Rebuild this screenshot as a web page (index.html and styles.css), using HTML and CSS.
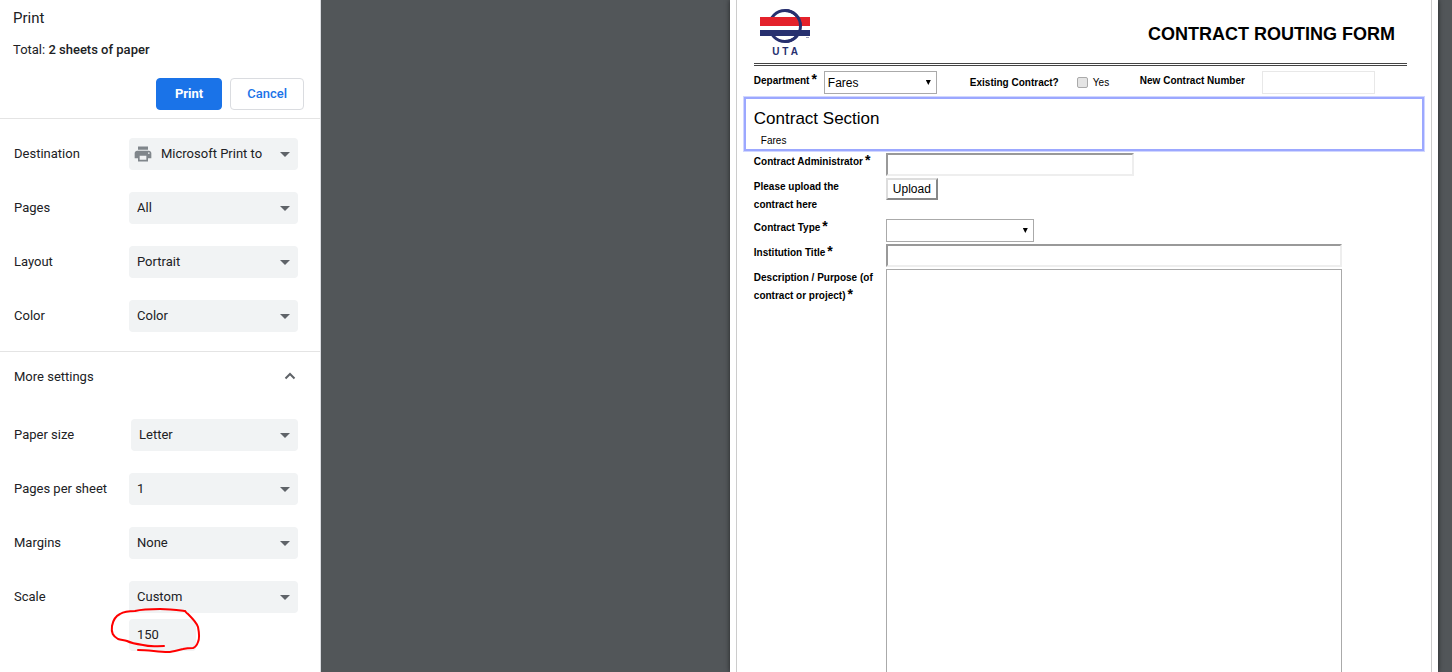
FILE: index.html
```html
<!DOCTYPE html>
<html lang="en">
<head>
    <meta charset="UTF-8">
    <meta name="viewport" content="width=device-width, initial-scale=1.0">
    <title>Print</title>
    <link rel="stylesheet" href="styles.css">
</head>
<body>

<aside class="sidebar">
    <header class="sidebar-header">
        <h1 class="title">Print</h1>
        <p class="total">Total: <span class="strong">2 sheets of paper</span></p>
        <div class="buttons">
            <button type="button" class="btn btn-primary">Print</button>
            <button type="button" class="btn">Cancel</button>
        </div>
    </header>

    <section class="settings">
        <div class="row">
            <label for="destination">Destination</label>
            <div class="control select has-icon">
                <svg class="printer" viewBox="0 0 24 24" aria-hidden="true">
                    <path d="M19 8H5c-1.66 0-3 1.34-3 3v6h4v4h12v-4h4v-6c0-1.66-1.34-3-3-3zm-3 11H8v-5h8v5zm3-7c-.55 0-1-.45-1-1s.45-1 1-1 1 .45 1 1-.45 1-1 1zm-1-9H6v4h12V3z"/>
                </svg>
                <select id="destination"><option>Microsoft Print to</option></select>
            </div>
        </div>
        <div class="row">
            <label for="pages">Pages</label>
            <div class="control select"><select id="pages"><option>All</option></select></div>
        </div>
        <div class="row">
            <label for="layout">Layout</label>
            <div class="control select"><select id="layout"><option>Portrait</option></select></div>
        </div>
        <div class="row">
            <label for="color">Color</label>
            <div class="control select"><select id="color"><option>Color</option></select></div>
        </div>
    </section>

    <button type="button" class="more">
        More settings
        <svg class="chevron" viewBox="0 0 12 8" aria-hidden="true"><path d="M1.5 6.5 6 2l4.5 4.5"/></svg>
    </button>

    <section class="settings">
        <div class="row">
            <label for="paper">Paper size</label>
            <div class="control select narrow"><select id="paper"><option>Letter</option></select></div>
        </div>
        <div class="row">
            <label for="perSheet">Pages per sheet</label>
            <div class="control select"><select id="perSheet"><option>1</option></select></div>
        </div>
        <div class="row">
            <label for="margins">Margins</label>
            <div class="control select"><select id="margins"><option>None</option></select></div>
        </div>
        <div class="row">
            <label for="scale">Scale</label>
            <div class="control">
                <div class="select"><select id="scale"><option>Custom</option></select></div>
                <div class="scale-value">
                    <input type="text" value="150" aria-label="Scale value">
                    <svg class="marker" viewBox="0 0 92 50" aria-hidden="true">
                        <path d="M54 40C45 40 40 41 33 39C26 38 21 37 17 35C14 34 11 34 8 33C3 30 1 27 2 20C3 14 6 10 10 8C15 5 20 5 25 5C33 3 40 3 50 3C60 3 67 4 75 5C76 6 76 7 78 8C83 13 87 17 88 21C89 26 90 32 88 36C87 39 86 41 83 42C80 42 77 42 73 43C68 44 63 46 58 46C48 46 39 44 28 44"/>
                    </svg>
                </div>
            </div>
        </div>
    </section>
</aside>

<main class="preview">
    <div class="paper">
        <form class="form">
            <header class="form-header">
                <svg class="logo" viewBox="0 0 52 50" role="img" aria-label="UTA">
                    <circle cx="26" cy="18" r="15.500" fill="none" stroke="#27306f" stroke-width="3"/>
                    <rect x="1" y="9" width="50" height="9" fill="#e4222b"/>
                    <rect x="1" y="18" width="50" height="4" fill="#fff"/>
                    <rect x="1" y="22" width="50" height="6" fill="#27306f"/>
                    <path d="M26 2.500A15.500 15.500 0 0 1 26 33.500" fill="none" stroke="#27306f" stroke-width="3"/>
                    <path d="M47 29.500h3" stroke="#9a9db8"/>
                    <text class="logo-text" x="26" y="47" text-anchor="middle">U T A</text>
                </svg>
                <h2 class="form-title">CONTRACT ROUTING FORM</h2>
            </header>

            <div class="top-fields">
                <div class="field">
                    <label class="department" for="department">Department<span class="star">*</span></label>
                    <div class="box-select short"><select id="department"><option>Fares</option></select></div>
                </div>
                <fieldset class="field existing">
                    <legend class="legend">Existing Contract?</legend>
                    <input type="checkbox" id="existing">
                    <label class="yes" for="existing">Yes</label>
                </fieldset>
                <div class="field">
                    <label class="number" for="number">New Contract Number</label>
                    <input type="text" id="number" class="flat short">
                </div>
            </div>

            <section class="contract-section">
                <h3>Contract Section</h3>
                <p>Fares</p>
            </section>

            <div class="fields">
                <label for="admin">Contract Administrator<span class="star">*</span></label>
                <input type="text" id="admin" class="inset medium">

                <label for="upload">Please upload the contract here</label>
                <button type="button" id="upload" class="upload">Upload</button>

                <label for="type">Contract Type<span class="star">*</span></label>
                <div class="box-select type"><select id="type"><option></option></select></div>

                <label for="institution">Institution Title<span class="star">*</span></label>
                <input type="text" id="institution" class="inset wide">

                <label for="description">Description / Purpose (of contract or project)<span class="star">*</span></label>
                <textarea id="description" class="wide"></textarea>
            </div>
        </form>
    </div>
</main>

</body>
</html>
```
FILE: styles.css
```css
* {
    box-sizing: border-box;
}

body {
    display: flex;
    height: 100vh;
    margin: 0;
    overflow: hidden;
    background-color: #525659;
    color: #202124;
    font-family: Roboto, sans-serif;
    font-size: 13px;
}

h1, h2, h3, p {
    margin: 0;
    font-weight: normal;
}

button, input, select, textarea {
    font: inherit;
    color: inherit;
    margin: 0;
}

/* sidebar */
.sidebar {
    flex: 0 0 321px;
    background-color: #fff;
    border-right: 1px solid #dadce0;
    overflow: hidden;
}

.sidebar-header {
    padding: 8px 16px 8px 13px;
    border-bottom: 1px solid #e4e4e4;
}

.title {
    font-size: 15px;
    line-height: 20px;
}

.total {
    margin-top: 12px;
    line-height: 20px;
}

.strong {
    font-weight: 500;
}

.buttons {
    display: flex;
    justify-content: flex-end;
    gap: 8px;
    margin-top: 18px;
}

.btn {
    height: 32px;
    padding: 0 16px 2px;
    border: 1px solid #dadce0;
    border-radius: 4px;
    background-color: #fff;
    color: #1a73e8;
    font-weight: 500;
}

.btn-primary {
    padding: 0 18px 2px;
    border-color: #1a73e8;
    background-color: #1a73e8;
    color: #fff;
    font-weight: 700;
}

.settings {
    padding: 8px 22px 8px 14px;
}

.row {
    display: flex;
    justify-content: space-between;
    padding: 11px 0;
    line-height: 32px;
}

.control {
    width: 169px;
}

.narrow {
    width: 167px;
}

.select {
    position: relative;
}

.select select {
    display: block;
    width: 100%;
    height: 32px;
    padding: 0 32px 0 8px;
    border: 0;
    border-radius: 4px;
    background-color: #f1f3f4;
    appearance: none;
}

.select::after {
    content: "";
    position: absolute;
    top: 14px;
    right: 8px;
    width: 10px;
    height: 5px;
    background-color: #5f6368;
    clip-path: polygon(0 0, 100% 0, 50% 100%);
    pointer-events: none;
}

.has-icon select {
    padding-left: 32px;
}

.printer {
    position: absolute;
    top: 6px;
    left: 4px;
    width: 20px;
    height: 20px;
    fill: #80868b;
}

.more {
    display: flex;
    align-items: center;
    justify-content: space-between;
    width: 100%;
    height: 49px;
    padding: 0 24px 0 14px;
    border: 0;
    border-top: 1px solid #e4e4e4;
    background-color: #fff;
}

.chevron {
    width: 12px;
    height: 8px;
    fill: none;
    stroke: #5f6368;
    stroke-width: 2;
}

.scale-value {
    position: relative;
    width: 67px;
    margin-top: 6px;
}

.scale-value input {
    display: block;
    width: 100%;
    height: 32px;
    padding: 0 8px;
    border: 0;
    border-radius: 4px;
    background-color: #f1f3f4;
}

/* red pen circle around the scale */
.marker {
    position: absolute;
    top: -13px;
    left: -19px;
    width: 92px;
    height: 50px;
    fill: none;
    stroke: #f00;
    stroke-width: 2;
    stroke-linecap: round;
    pointer-events: none;
}

/* preview */
.preview {
    flex: 1;
    display: flex;
    justify-content: flex-end;
    padding-right: 14px;
    font-family: "Liberation Sans", Arial, sans-serif;
    font-size: 10px;
    color: #000;
}

.paper {
    width: 63.4%;
    padding: 0 6px;
    background-color: #fff;
    box-shadow: 0 0 5px rgba(0, 0, 0, 0.6);
}

.form {
    display: flex;
    flex-direction: column;
    height: 100%;
    border: solid #ccc;
    border-width: 0 1px;
}

.form-header {
    display: flex;
    justify-content: space-between;
    height: 66px;
    margin: 0 24px 0 17px;
    padding: 8px 12px 0 5px;
    border-bottom: 3px double #444;
}

.logo {
    width: 52px;
    height: 50px;
}

.logo-text {
    font-size: 10px;
    font-weight: bold;
    fill: #27306f;
}

.form-title {
    font-size: 18px;
    font-weight: bold;
    line-height: 52px;
}

.top-fields {
    display: grid;
    grid-template-columns: 216px 170px 1fr;
    padding: 5px 17px 3px;
}

.field {
    display: flex;
    font-weight: bold;
    line-height: 20px;
}

.existing {
    align-items: center;
    margin: 0;
    padding: 0;
    border: 0;
}

.legend {
    float: left;
    width: 107px;
    padding: 0;
}

.existing input {
    width: 11px;
    height: 11px;
    border: 1px solid #aaa;
    border-radius: 2px;
    background-color: #e4e4e4;
    appearance: none;
}

.yes {
    margin-left: 5px;
    font-weight: normal;
}

.department {
    width: 70px;
}

.number {
    width: 122px;
}

.star {
    margin-left: 2px;
    font-size: 14px;
    line-height: 0;
    vertical-align: 0;
}

.short {
    width: 113px;
}

.medium {
    width: 248px;
}

.wide {
    width: 456px;
    max-width: 100%;
}

.box-select {
    position: relative;
}

.type {
    width: 148px;
}

.box-select select {
    display: block;
    width: 100%;
    height: 23px;
    padding: 0 20px 0 3px;
    border: 1px solid #aaa;
    border-radius: 0;
    background-color: #fff;
    font-size: 12px;
    font-weight: normal;
    appearance: none;
}

.box-select::after {
    content: "";
    position: absolute;
    top: 9px;
    right: 6px;
    width: 5px;
    height: 5px;
    background-color: #000;
    clip-path: polygon(0 0, 100% 0, 50% 100%);
    pointer-events: none;
}

.flat {
    height: 23px;
    border: 1px solid #e8e8e8;
    background-color: #fff;
}

.contract-section {
    margin: 0 7px 1px;
    padding: 9px 8px 2px;
    border: 2px solid #9ca8ff;
    box-shadow: 0 0 0 1px #d0d6ff;
}

.contract-section h3 {
    font-size: 17px;
    line-height: 22px;
}

.contract-section p {
    margin-top: 5px;
    padding-left: 7px;
    line-height: 12px;
}

.fields {
    flex: 1;
    display: grid;
    grid-template-columns: 132px 1fr;
    grid-template-rows: 25px 41px 25px 25px 1fr;
    align-items: start;
    padding: 1px 17px 0;
    font-weight: bold;
    line-height: 18px;
}

.fields label {
    padding-right: 8px;
}

.inset {
    height: 23px;
    border: 2px solid;
    border-color: #999 #eee #eee #999;
    background-color: #fff;
}

.upload {
    justify-self: start;
    height: 22px;
    padding: 0 5px;
    border: 2px solid;
    border-color: #ddd #888 #888 #ddd;
    background-color: #fff;
    font-size: 12px;
    font-weight: normal;
}

textarea {
    height: 100%;
    border: 1px solid #aaa;
    border-bottom: 0;
    resize: none;
}
```
